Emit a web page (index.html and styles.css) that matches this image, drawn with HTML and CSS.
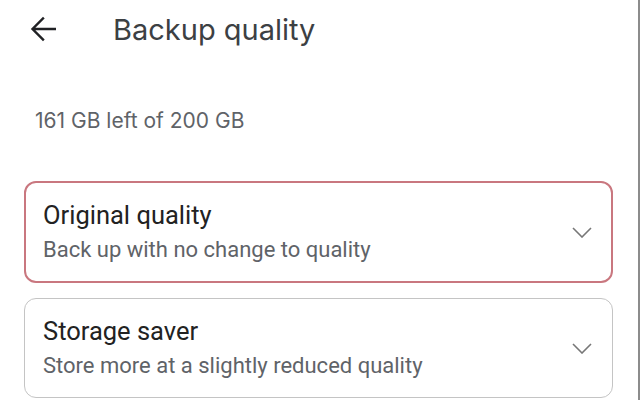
FILE: index.html
```html
<!DOCTYPE html>
<html lang="en">
<head>
<meta charset="utf-8">
<title>Backup quality</title>
<link rel="stylesheet" href="styles.css">
</head>
<body>
<div class="page">
  <header class="topbar">
    <span class="back" aria-label="Back">
      <svg width="26" height="26" viewBox="0 0 26 26"><path d="M25 13H3.5M13 2.5L2.5 13 13 23.5" fill="none" stroke="#202124" stroke-width="2.4" stroke-linecap="square"/></svg>
    </span>
    <h1 class="title">Backup quality</h1>
  </header>
  <p class="storage">161 GB left of 200 GB</p>
  <div class="options">
    <div class="option selected">
      <div class="option-text">
        <div class="option-title">Original quality</div>
        <div class="option-sub">Back up with no change to quality</div>
      </div>
      <svg class="chev" width="20" height="11" viewBox="0 0 20 11"><path d="M1 1l9 9 9-9" fill="none" stroke="#777" stroke-width="1.6"/></svg>
    </div>
    <div class="option">
      <div class="option-text">
        <div class="option-title">Storage saver</div>
        <div class="option-sub">Store more at a slightly reduced quality</div>
      </div>
      <svg class="chev" width="20" height="11" viewBox="0 0 20 11"><path d="M1 1l9 9 9-9" fill="none" stroke="#777" stroke-width="1.6"/></svg>
    </div>
  </div>
</div>
</body>
</html>
```
FILE: styles.css
```css
html, body {
  margin: 0;
  padding: 0;
  background: #fff;
}
.page {
  width: 640px;
  height: 400px;
  box-sizing: border-box;
  border-right: 2px solid #8c8c8c;
  overflow: hidden;
  font-family: Roboto, "Liberation Sans", sans-serif;
}
.topbar {
  display: flex;
  align-items: center;
  height: 58px;
  padding-left: 30px;
}
.back {
  display: flex;
  width: 26px;
  height: 26px;
}
.title {
  margin: 0 0 0 57px;
  font-family: Inter, Roboto, sans-serif;
  font-weight: 400;
  font-size: 29px;
  color: #3c4043;
  letter-spacing: 0;
}
.storage {
  margin: 50px 0 0 35px;
  font-family: Inter, Roboto, sans-serif;
  font-size: 21px;
  line-height: 26px;
  color: #5f6368;
}
.options {
  display: flex;
  flex-direction: column;
  gap: 15px;
  margin: 47px 25px 0 24px;
}
.option {
  display: flex;
  align-items: center;
  justify-content: space-between;
  border: 1px solid #c4c4c4;
  border-radius: 12px;
  padding: 0 20px 0 18px;
  height: 98px;
}
.option.selected {
  border: 2px solid #c9777f;
  padding: 0 19px 0 17px;
  height: 98px;
}
.option-text {
  display: flex;
  flex-direction: column;
  gap: 6px;
}
.option-title {
  font-size: 25.5px;
  line-height: 30px;
  color: #222;
}
.option-sub {
  font-size: 22px;
  line-height: 28px;
  color: #5f6368;
}
.chev {
  flex: none;
}
```
